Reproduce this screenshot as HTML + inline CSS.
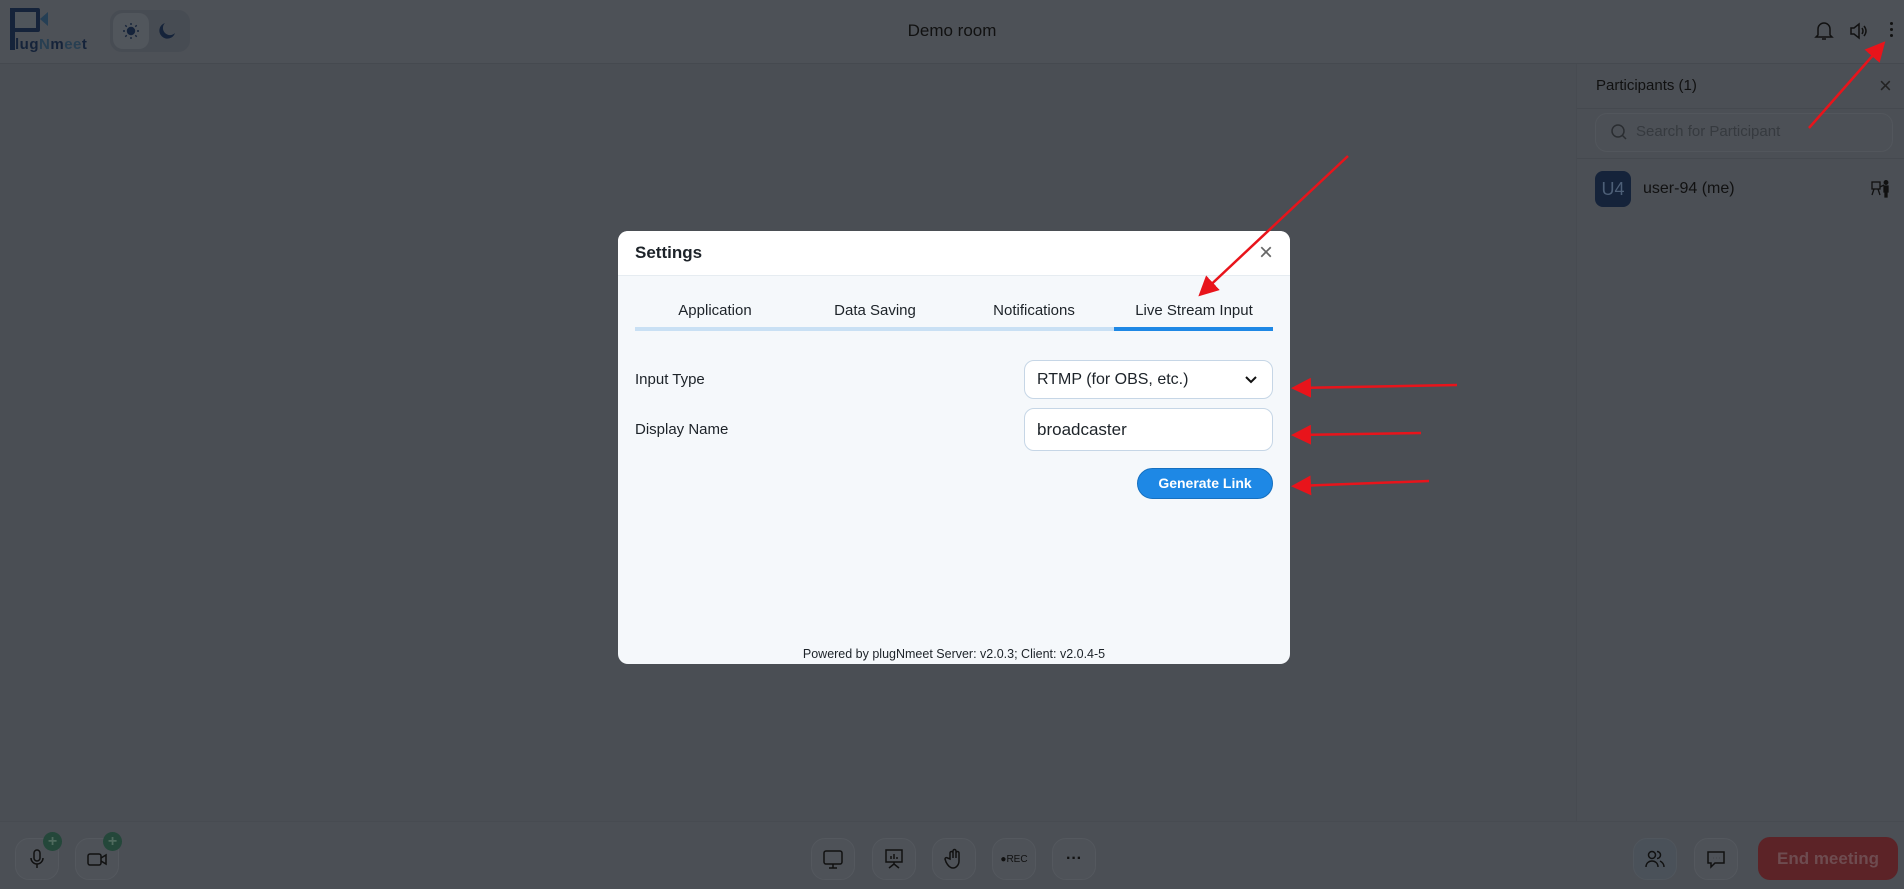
<!DOCTYPE html>
<html><head><meta charset="utf-8"><style>
*{box-sizing:border-box;margin:0;padding:0}
body{width:1904px;height:889px;overflow:hidden;background:#4a4e54;font-family:"Liberation Sans",sans-serif;position:relative}
.hdr{position:absolute;left:0;top:0;width:1904px;height:64px;background:#4d5157;border-bottom:1px solid #45494f}
.side{position:absolute;left:1576px;top:64px;width:328px;height:757px;background:#4b4f55;border-left:1px solid #474b51}
.bot{position:absolute;left:0;top:821px;width:1904px;height:68px;background:#4b4f55;border-top:1px solid #474b51}
.btn{position:absolute;top:838px;width:44px;height:42px;border-radius:14px;border:1px solid #54585e;background:#4e5258;display:flex;align-items:center;justify-content:center}
.modal{position:absolute;left:618px;top:231px;width:672px;height:433px;background:#f5f8fb;border-radius:10px;overflow:hidden}
.mh{height:45px;background:#fff;border-bottom:1px solid #e6ecf1;padding:0 17px;display:flex;align-items:center;justify-content:space-between}
.tab{position:absolute;top:302px;font-size:15px;color:#1d2329;width:160px;text-align:center}
.lbl{position:absolute;font-size:15px;color:#1d2329}
.inp{position:absolute;left:1024px;width:249px;border:1px solid #c6d6e6;border-radius:10px;background:#fff;font-size:16px;color:#1d2329;padding-left:12px;display:flex;align-items:center}
.plus{position:absolute;top:832px;width:19px;height:19px;border-radius:50%;background:#24473a;color:#4f6a5e;font-size:16px;font-weight:bold;text-align:center;line-height:19px}
</style></head><body>
<div class="hdr"></div>
<!-- logo -->
<div style="position:absolute;left:10px;top:8px;width:30px;height:24px;border:4px solid #15233a;border-radius:2px;background:#4f555b"></div>
<div style="position:absolute;left:10px;top:8px;width:5px;height:42px;background:#15233a"></div>
<div style="position:absolute;left:40px;top:12px;width:0;height:0;border-top:7px solid transparent;border-bottom:7px solid transparent;border-right:8px solid #253f55"></div>
<div style="position:absolute;left:15px;top:36px;font-size:15px;font-weight:bold;color:#15233a;letter-spacing:0.5px">lug<span style="color:#283f52">N</span>m<span style="color:#283f52">ee</span>t</div>
<div style="position:absolute;left:110px;top:10px;width:80px;height:42px;border-radius:12px;background:#474c53"></div>
<div style="position:absolute;left:113px;top:13px;width:36px;height:36px;border-radius:10px;background:#51565c"></div>
<svg style="position:absolute;left:122px;top:22px" width="18" height="18" viewBox="0 0 18 18" fill="#15233a" stroke="#15233a" stroke-width="1.4"><circle cx="9" cy="9" r="3.5"/><path d="M9 1v2M9 15v2M1 9h2M15 9h2M3.3 3.3l1.4 1.4M13.3 13.3l1.4 1.4M3.3 14.7l1.4-1.4M13.3 4.7l1.4-1.4"/></svg>
<svg style="position:absolute;left:158px;top:22px" width="18" height="18" viewBox="0 0 18 18"><path d="M7 1a8 8 0 1010 10A6.5 6.5 0 017 1z" fill="#15233a"/></svg>
<div style="position:absolute;left:0;width:1904px;top:21px;text-align:center;font-size:17px;color:#111">Demo room</div>
<!-- header right icons -->
<svg style="position:absolute;left:1814px;top:20px" width="20" height="22" viewBox="0 0 20 22" fill="none" stroke="#111" stroke-width="1.5"><path d="M4 15V9a6 6 0 0112 0v6l2 2H2z"/><path d="M8 19h4"/></svg>
<svg style="position:absolute;left:1849px;top:21px" width="20" height="20" viewBox="0 0 20 20" fill="none" stroke="#111" stroke-width="1.5"><path d="M2 7h3l5-4v14l-5-4H2z"/><path d="M13 7q2 3 0 6M15 5q4 5 0 10"/></svg>
<div style="position:absolute;left:1890px;top:22px;width:3px;height:3px;background:#111;border-radius:2px;box-shadow:0 6px 0 #111,0 12px 0 #111"></div>
<!-- sidebar -->
<div class="side">
<div style="position:absolute;left:0;top:0;width:327px;height:45px;border-bottom:1px solid #45494f"></div>
<div style="position:absolute;left:19px;top:13px;font-size:15px;color:#111">Participants (1)</div>
<div style="position:absolute;left:302px;top:9px;font-size:22px;color:#222">×</div>
<div style="position:absolute;left:18px;top:49px;width:298px;height:39px;border:1px solid #52565c;border-radius:12px;background:#4c5056"></div>
<svg style="position:absolute;left:33px;top:59px" width="18" height="18" viewBox="0 0 18 18" fill="none" stroke="#2a2d31" stroke-width="1.5"><circle cx="8" cy="8" r="6"/><path d="M12.5 12.5L16 16"/></svg>
<div style="position:absolute;left:59px;top:59px;font-size:15px;color:#363a3f">Search for Participant</div>
<div style="position:absolute;left:0;top:94px;width:327px;height:1px;background:#45494f"></div>
<div style="position:absolute;left:18px;top:107px;width:36px;height:36px;border-radius:8px;background:#15233a;color:#4d5f77;font-size:18px;text-align:center;line-height:36px">U4</div>
<div style="position:absolute;left:66px;top:116px;font-size:16px;color:#111">user-94 (me)</div>
<svg style="position:absolute;left:294px;top:116px" width="20" height="18" viewBox="0 0 20 18" fill="none" stroke="#111" stroke-width="1.3"><rect x="1" y="2" width="8" height="7"/><path d="M3 9l-2 6M7 9l2 6M9 7l4-2"/><circle cx="15" cy="2.5" r="1.8" fill="#111"/><path d="M13 6h4v6h-1v5h-2v-5h-1z" fill="#111"/></svg>
</div>
<!-- bottom -->
<div class="bot"></div>
<div class="btn" style="left:15px"><svg width="20" height="22" viewBox="0 0 20 22" fill="none" stroke="#111" stroke-width="1.5"><rect x="7" y="2" width="6" height="11" rx="3"/><path d="M4 10a6 6 0 0012 0M10 16v4"/></svg></div>
<div class="plus" style="left:43px">+</div>
<div class="btn" style="left:75px"><svg width="22" height="20" viewBox="0 0 22 20" fill="none" stroke="#111" stroke-width="1.5"><rect x="2" y="5" width="13" height="11" rx="2"/><path d="M15 9l5-3v9l-5-3"/></svg></div>
<div class="plus" style="left:103px">+</div>
<div class="btn" style="left:811px"><svg width="22" height="22" viewBox="0 0 22 22" fill="none" stroke="#111" stroke-width="1.5"><rect x="2" y="3" width="18" height="13" rx="2"/><path d="M11 16v4M7 20h8"/></svg></div>
<div class="btn" style="left:872px"><svg width="22" height="22" viewBox="0 0 22 22" fill="none" stroke="#111" stroke-width="1.5"><rect x="3" y="2" width="16" height="12"/><path d="M8 11V8M11 11V6M14 11V9M11 14v2M6 20l5-4 5 4"/></svg></div>
<div class="btn" style="left:932px"><svg width="22" height="22" viewBox="0 0 22 22" fill="none" stroke="#111" stroke-width="1.5"><path d="M7 11V5a1.5 1.5 0 013 0v5V3a1.5 1.5 0 013 0v7V5a1.5 1.5 0 013 0v8c0 4-3 7-6 7s-5-2-7-6l-1-3a1.5 1.5 0 012.5-1z"/></svg></div>
<div class="btn" style="left:992px;font-size:10px;color:#111">●REC</div>
<div class="btn" style="left:1052px;font-size:16px;color:#111;font-weight:bold">···</div>
<div class="btn" style="left:1633px;background:#4a5159;border-color:#50565d"><svg width="22" height="22" viewBox="0 0 22 22" fill="none" stroke="#111" stroke-width="1.5"><circle cx="8" cy="7" r="3.5"/><path d="M2 19c0-4 3-6 6-6s6 2 6 6M13 3.5a3.5 3.5 0 010 7M16 13c2 1 4 3 4 6"/></svg></div>
<div class="btn" style="left:1694px"><svg width="22" height="22" viewBox="0 0 22 22" fill="none" stroke="#111" stroke-width="1.5"><path d="M3 4h16v11H10l-4 4v-4H3z"/><path d="M8 10h.1M11 10h.1M14 10h.1" stroke-width="2"/></svg></div>
<div style="position:absolute;left:1758px;top:837px;width:140px;height:43px;border-radius:12px;background:#5c2327;color:#6e4c50;font-size:17px;font-weight:bold;text-align:center;line-height:43px">End meeting</div>
<!-- modal -->
<div class="modal">
<div class="mh"><span style="font-size:17px;font-weight:bold;color:#1d2329">Settings</span><span style="font-size:24px;color:#666;font-weight:300">×</span></div>
</div>
<div style="position:absolute;left:635px;top:327px;width:638px;height:4px;background:#c9e0f4"></div>
<div style="position:absolute;left:1114px;top:327px;width:159px;height:4px;background:#1e88e5"></div>
<div class="tab" style="left:635px">Application</div>
<div class="tab" style="left:795px">Data Saving</div>
<div class="tab" style="left:954px">Notifications</div>
<div class="tab" style="left:1114px">Live Stream Input</div>
<div class="lbl" style="left:635px;top:371px">Input Type</div>
<div class="lbl" style="left:635px;top:421px">Display Name</div>
<div class="inp" style="top:360px;height:39px">RTMP (for OBS, etc.)<svg style="position:absolute;right:14px;top:14px" width="14" height="10" viewBox="0 0 14 10" fill="none" stroke="#111" stroke-width="2"><path d="M2 2l5 5 5-5"/></svg></div>
<div class="inp" style="top:408px;height:43px;font-size:17px">broadcaster</div>
<div style="position:absolute;left:1137px;top:468px;width:136px;height:31px;border-radius:16px;background:#1e88e5;border:1px solid #1670c0;color:#fff;font-size:14px;font-weight:bold;text-align:center;line-height:29px">Generate Link</div>
<div style="position:absolute;left:618px;width:672px;top:647px;text-align:center;font-size:12.5px;color:#1d2329">Powered by plugNmeet Server: v2.0.3; Client: v2.0.4-5</div>
<!-- arrows -->
<svg style="position:absolute;left:0;top:0" width="1904" height="889" fill="none" stroke="#e8141b" stroke-width="2.5">
<defs><marker id="a" markerWidth="8" markerHeight="8" refX="6" refY="4" orient="auto" markerUnits="strokeWidth"><path d="M0 0L8 4L0 8z" fill="#e8141b" stroke="none"/></marker></defs>
<path d="M1348 156L1202 293" marker-end="url(#a)"/>
<path d="M1809 128L1882 45" marker-end="url(#a)"/>
<path d="M1457 385L1296 388" marker-end="url(#a)"/>
<path d="M1421 433L1296 435" marker-end="url(#a)"/>
<path d="M1429 481L1296 486" marker-end="url(#a)"/>
</svg>
</body></html>
